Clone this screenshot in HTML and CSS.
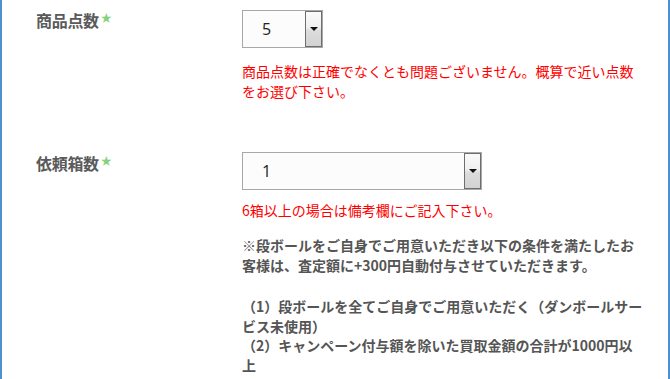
FILE: index.html
```html
<!DOCTYPE html>
<html lang="ja">
<head>
<meta charset="utf-8">
<link rel="stylesheet" href="styles.css">
</head>
<body>
<div class="page">
  <div class="row row-first">
    <div class="label">商品点数<span class="req">★</span></div>
    <div class="field">
      <div class="select select-small"><span class="val">5</span><span class="btn"><i class="arrow"></i></span></div>
      <p class="note red note-first">商品点数は正確でなくとも問題ございません。概算で近い点数<br>をお選び下さい。</p>
    </div>
  </div>
  <div class="row row-second">
    <div class="label">依頼箱数<span class="req">★</span></div>
    <div class="field">
      <div class="select select-wide"><span class="val">1</span><span class="btn"><i class="arrow"></i></span></div>
      <p class="note red note-second">6箱以上の場合は備考欄にご記入下さい。</p>
      <p class="note bold">※段ボールをご自身でご用意いただき以下の条件を満たしたお<br>客様は、査定額に+300円自動付与させていただきます。</p>
      <p class="note bold list">（1）段ボールを全てご自身でご用意いただく（ダンボールサー<br>ビス未使用）<br>（2）キャンペーン付与額を除いた買取金額の合計が1000円以<br>上</p>
    </div>
  </div>
</div>
</body>
</html>
```

FILE: styles.css
```css
html, body {
  margin: 0;
  padding: 0;
  background: #ffffff;
}

body {
  font-family: "Noto Sans CJK JP", "Noto Sans", sans-serif;
  color: #555555;
}

.page {
  box-sizing: border-box;
  width: 670px;
  height: 379px;
  overflow: hidden;
  border-left: 2px solid #4e8fcc;
  border-right: 2px solid #4e8fcc;
  background: #ffffff;
}

.row {
  display: flex;
  align-items: flex-start;
  padding-left: 34px;
}

.row-first {
  padding-top: 10px;
}

.row-second {
  margin-top: 51px;
}

.label {
  width: 206px;
  flex: none;
  font-size: 16px;
  line-height: 20px;
  font-weight: bold;
  color: #5a5a5a;
  letter-spacing: -0.3px;
}

.row-second .label {
  padding-top: 1px;
}

.req {
  color: #86d27a;
  font-size: 11px;
  vertical-align: top;
  line-height: 14px;
  margin-left: 2px;
  font-weight: normal;
}

.field {
  width: 410px;
  flex: none;
}

.select {
  box-sizing: border-box;
  height: 38px;
  border: 1px solid #a8a8a8;
  background: #fcfcfc;
  display: flex;
  align-items: stretch;
  justify-content: space-between;
}

.select-small {
  width: 81px;
}

.select-wide {
  width: 240px;
}

.val {
  padding-left: 19px;
  font-family: "Open Sans", "Noto Sans", sans-serif;
  font-size: 16px;
  line-height: 36px;
  color: #222222;
}

.btn {
  box-sizing: border-box;
  width: 17px;
  border: 1px solid #6e6e6e;
  background: linear-gradient(#fafafa 0%, #f0f0f0 45%, #dcdcdc 55%, #d2d2d2 100%);
  display: flex;
  align-items: center;
  justify-content: center;
}

.arrow {
  display: block;
  width: 0;
  height: 0;
  border-left: 4px solid transparent;
  border-right: 4px solid transparent;
  border-top: 4px solid #111111;
}

.note {
  margin: 0;
  font-size: 14px;
  line-height: 20px;
}

.red {
  color: #ff0000;
}

.note-first {
  margin-top: 13px;
}

.note-second {
  margin-top: 10px;
}

.bold {
  font-weight: bold;
  color: #555555;
  margin-top: 15px;
}

.list {
  margin-top: 22px;
  line-height: 19.5px;
}
```
